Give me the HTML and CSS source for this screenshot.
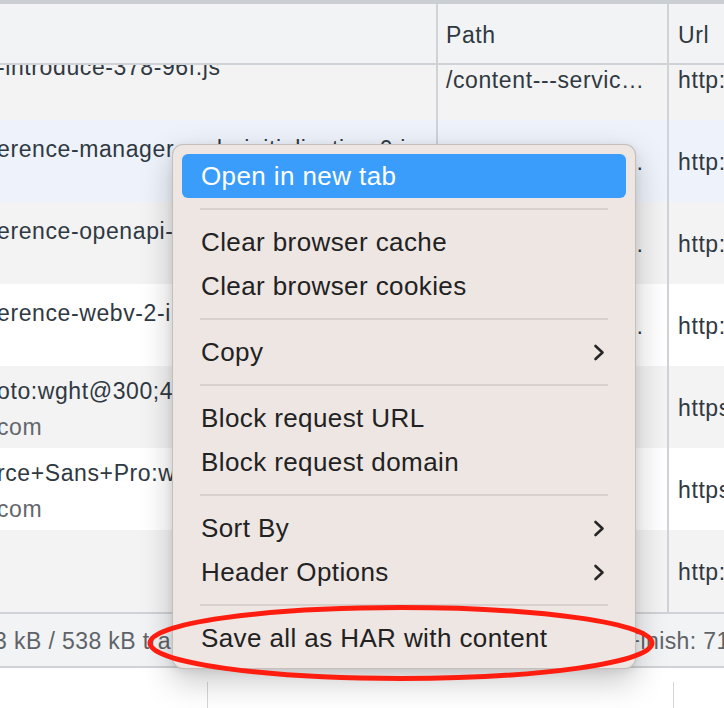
FILE: index.html
```html
<!DOCTYPE html>
<html lang="en">
<head>
<meta charset="utf-8">
<title>Network panel context menu</title>
<link rel="stylesheet" href="styles.css">
</head>
<body>
<div class="app">
  <div class="topbar"></div>
  <div class="thead cols">
    <div class="cell c-name"></div>
    <div class="cell c-path">Path</div>
    <div class="cell c-url">Url</div>
  </div>
  <div class="tbody">
    <div class="rows">
      <div class="row cols gray single">
        <div class="cell c-name"><div class="l1">-introduce-378-96f.js</div><div class="l2"></div></div>
        <div class="cell c-path">/content---servic…</div>
        <div class="cell c-url">http://localhost:8080/content</div>
      </div>
      <div class="row cols blue single">
        <div class="cell c-name"><div class="l1">erence-manager-node-initialization-0.js</div><div class="l2"></div></div>
        <div class="cell c-path">/content---servic…</div>
        <div class="cell c-url">http://localhost:8080/content</div>
      </div>
      <div class="row cols gray single">
        <div class="cell c-name"><div class="l1">erence-openapi-introduce-378-96f.js</div><div class="l2"></div></div>
        <div class="cell c-path">/content---servic…</div>
        <div class="cell c-url">http://localhost:8080/content</div>
      </div>
      <div class="row cols white single">
        <div class="cell c-name"><div class="l1">erence-webv-2-introduce-378-96f.js</div><div class="l2"></div></div>
        <div class="cell c-path">/content---servic…</div>
        <div class="cell c-url">http://localhost:8080/content</div>
      </div>
      <div class="row cols gray">
        <div class="cell c-name"><div class="l1">oto:wght@300;400;500;700&amp;display=swap</div><div class="l2">com</div></div>
        <div class="cell c-path">/css2</div>
        <div class="cell c-url">https://fonts.googleapis.com/css2</div>
      </div>
      <div class="row cols white">
        <div class="cell c-name"><div class="l1">rce+Sans+Pro:wght@400;600&amp;display=swap</div><div class="l2">com</div></div>
        <div class="cell c-path">/css2</div>
        <div class="cell c-url">https://fonts.googleapis.com/css2</div>
      </div>
      <div class="row cols gray">
        <div class="cell c-name"><div class="l1"></div><div class="l2"></div></div>
        <div class="cell c-path">/</div>
        <div class="cell c-url">http://localhost:8080/</div>
      </div>
    </div>
  </div>
  <div class="status">
    <span class="st-left">3 kB / 538 kB transferred | 1.9 MB / 2.0 MB resources</span>
    <span class="st-right">Finish: 716 ms | DOMContentLoaded</span>
  </div>
  <div class="bottom">
    <div class="b-cell"></div>
    <div class="b-cell"></div>
    <div class="b-cell last"></div>
  </div>

  <div class="menu">
    <div class="item active">Open in new tab</div>
    <div class="sep"></div>
    <div class="item">Clear browser cache</div>
    <div class="item">Clear browser cookies</div>
    <div class="sep"></div>
    <div class="item">Copy<svg class="chev" viewBox="0 0 12 17" width="12" height="17"><path d="M2.5 2 L9.5 8.5 L2.5 15"/></svg></div>
    <div class="sep"></div>
    <div class="item">Block request URL</div>
    <div class="item">Block request domain</div>
    <div class="sep"></div>
    <div class="item">Sort By<svg class="chev" viewBox="0 0 12 17" width="12" height="17"><path d="M2.5 2 L9.5 8.5 L2.5 15"/></svg></div>
    <div class="item">Header Options<svg class="chev" viewBox="0 0 12 17" width="12" height="17"><path d="M2.5 2 L9.5 8.5 L2.5 15"/></svg></div>
    <div class="sep"></div>
    <div class="item">Save all as HAR with content</div>
  </div>

  <svg class="mark" viewBox="0 0 510 80" width="510" height="80">
    <ellipse cx="255" cy="39" rx="251" ry="35.5"/>
  </svg>
</div>
</body>
</html>
```

FILE: styles.css
```css
html, body {
  margin: 0;
  padding: 0;
  background: #ffffff;
}

body {
  font-family: "Liberation Sans", Arial, sans-serif;
  overflow: hidden;
}

.app {
  position: relative;
  width: 724px;
  height: 708px;
  overflow: hidden;
  display: flex;
  flex-direction: column;
  background: #ffffff;
}

.topbar {
  height: 4px;
  flex: none;
  background: #cbced2;
}

.cols {
  display: grid;
  grid-template-columns: 438px 231px 1fr;
}

.cell {
  box-sizing: border-box;
  min-width: 0;
  overflow: hidden;
  white-space: nowrap;
  font-size: 23px;
  letter-spacing: 0.6px;
  color: #303942;
}

.c-name,
.c-path {
  border-right: 2px solid #cfd2d6;
}

.thead {
  flex: none;
  height: 61px;
  box-sizing: border-box;
  background: #f1f3f4;
  border-bottom: 2px solid #cfd2d6;
}

.thead .cell {
  display: flex;
  align-items: center;
  padding-top: 4px;
}

.c-path {
  padding-left: 8px;
}

.c-url {
  padding-left: 9px;
}

.tbody {
  flex: none;
  height: 547px;
  overflow: hidden;
}

.rows {
  margin-top: -27px;
}

.row {
  height: 82px;
}

.row.gray { background: #f3f3f3; }
.row.white { background: #ffffff; }
.row.blue { background: #eef3fb; }

.row .c-name {
  padding-top: 7px;
  line-height: 36px;
  text-indent: -3px;
}

.row.single .c-name {
  padding-top: 11px;
}

.row .c-name .l1,
.row .c-name .l2 {
  height: 36px;
  overflow: hidden;
}

.row .c-name .l2 {
  color: #63676c;
}

.row .c-path,
.row .c-url {
  display: flex;
  align-items: center;
  padding-top: 3px;
}

.status {
  flex: none;
  height: 56px;
  box-sizing: border-box;
  background: #f1f3f4;
  border-top: 2px solid #cfd2d6;
  border-bottom: 2px solid #cfd2d6;
  display: flex;
  align-items: center;
  padding-top: 2px;
  white-space: nowrap;
  overflow: hidden;
  font-size: 23px;
  letter-spacing: 0.4px;
  color: #5f6368;
}

.st-left {
  flex: none;
  width: 632px;
  margin-left: -6px;
  overflow: hidden;
}

.st-right {
  flex: none;
}

.bottom {
  flex: 1;
  display: grid;
  grid-template-columns: 208px 466px 1fr;
  padding-top: 14px;
  background: #ffffff;
}

.b-cell {
  border-right: 1px solid #d6d6d6;
}

.b-cell.last {
  border-right: none;
}

/* Context menu */
.menu {
  position: absolute;
  left: 172px;
  top: 144px;
  width: 464px;
  box-sizing: border-box;
  padding: 9px 9px 8px;
  background: #ede6e3;
  border: 1px solid rgba(0, 0, 0, 0.17);
  border-radius: 11px;
  box-shadow: 0 12px 32px rgba(0, 0, 0, 0.22), 0 2px 8px rgba(0, 0, 0, 0.08);
}

.item {
  height: 44px;
  display: flex;
  align-items: center;
  justify-content: space-between;
  padding: 0 21px 0 19px;
  border-radius: 6px;
  font-size: 26px;
  letter-spacing: 0.4px;
  color: #222222;
  white-space: nowrap;
}

.item.active {
  background: #3a9cfb;
  color: #ffffff;
}

.chev {
  flex: none;
}

.chev path {
  fill: none;
  stroke: #262626;
  stroke-width: 2.6;
  stroke-linecap: round;
  stroke-linejoin: round;
}

.sep {
  height: 22px;
  display: flex;
  align-items: center;
  padding: 0 18px;
}

.sep::before {
  content: "";
  flex: 1;
  height: 2px;
  background: #d8d0cc;
}

.mark {
  position: absolute;
  left: 146px;
  top: 604px;
  overflow: visible;
  pointer-events: none;
}

.mark ellipse {
  fill: none;
  stroke: #ff1d10;
  stroke-width: 5;
}
```
